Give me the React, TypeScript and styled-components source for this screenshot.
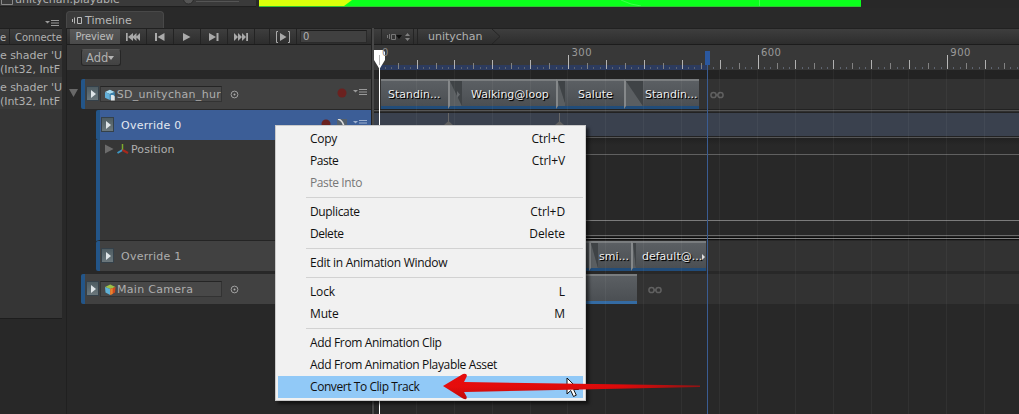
import React from "react";
import styled, { createGlobalStyle, css } from "styled-components";

const GlobalStyle = createGlobalStyle`
  * { box-sizing: border-box; }
  body { margin: 0; background: #282828; overflow: hidden; }
`;

const Editor = styled.div`
  position: relative;
  display: flex;
  flex-direction: column;
  width: 1019px;
  height: 414px;
  overflow: hidden;
  background: #282828;
  color: #b0b0b0;
  font: 11px/14px "DejaVu Sans", Verdana, sans-serif;
  white-space: nowrap;
  cursor: default;
`;

/* ---------- top strip ---------- */

const TopStrip = styled.div`
  display: flex;
  height: 8px;
  flex: none;
`;

const InspectorStrip = styled.div`
  display: flex;
  width: 256px;
  height: 7px;
  overflow: hidden;
  background: #3a3a3a;
  border-bottom: 1px solid #1f1f1f;
`;

const AssetName = styled.span`
  margin: -7px 0 0 1px;
  flex: 1;
`;

const GameView = styled.div`
  width: 602px;
  height: 7px;
  margin-left: 3px;
  background: #0aff1c;
  border-bottom: 1px solid #30c234;
  svg { display: block; }
`;

/* ---------- layout ---------- */

const Body = styled.div`
  display: flex;
  flex: 1;
  min-height: 0;
`;

const Console = styled.div`
  display: flex;
  flex-direction: column;
  width: 62px;
  height: 311px;
  flex: none;
  overflow: hidden;
  background: #353535;
  border-bottom: 1px solid #1d1d1d;
`;

const ConsoleTabs = styled.div`
  display: flex;
  justify-content: flex-end;
  height: 20px;
  padding: 12px 3px 0 0;
  background: #292929;
  flex: none;
`;

const ConsoleToolbar = styled.div`
  display: flex;
  height: 17px;
  flex: none;
  font-size: 10px;
  line-height: 17px;
  letter-spacing: -0.1px;
  background: linear-gradient(#3d3d3d, #2d2d2d);
  border-top: 1px solid #1f1f1f;
  border-bottom: 1px solid #1f1f1f;
`;

const ConsoleTool = styled.span<{ $w: number; $pad?: number }>`
  width: ${(p) => p.$w}px;
  padding-left: ${(p) => p.$pad ?? 0}px;
  border-right: 1px solid #222;
  flex: none;
`;

const LogEntry = styled.div<{ $alt?: boolean }>`
  height: 32px;
  padding-top: 4px;
  line-height: 13.5px;
  background: ${(p) => (p.$alt ? "#3b3b3b" : "#353535")};
  letter-spacing: -0.05px;
  white-space: pre;
  flex: none;
`;

const Timeline = styled.div`
  display: flex;
  flex-direction: column;
  width: 953px;
  margin-left: 4px;
  flex: none;
`;

const TabBar = styled.div`
  height: 20px;
  padding-top: 3px;
  background: #292929;
  flex: none;
`;

const Tab = styled.div`
  display: flex;
  align-items: center;
  width: 98px;
  height: 17px;
  padding: 1px 0 0 5px;
  gap: 3px;
  color: #b8b8b8;
  background: #3b3b3b;
  border: 1px solid #484848;
  border-bottom: 0;
  border-radius: 4px 4px 0 0;
`;

const Panes = styled.div`
  display: flex;
  flex: 1;
  min-height: 0;
`;

const Outline = styled.div`
  display: flex;
  flex-direction: column;
  width: 305px;
  border-left: 1px solid #202020;
`;

const Splitter = styled.div`
  width: 3px;
  background: #484848;
  border-left: 1px solid #222;
`;

const CanvasPane = styled.div`
  position: relative;
  display: flex;
  flex-direction: column;
  width: 645px;
`;

const toolbar = css`
  display: flex;
  height: 17px;
  flex: none;
  background: linear-gradient(#3e3e3e, #2d2d2d);
  border-top: 1px solid #212121;
  border-bottom: 1px solid #1c1c1c;
`;

const Toolbar = styled.div`
  ${toolbar}
  padding-left: 3px;
`;

const PreviewButton = styled.div`
  width: 50px;
  padding-right: 1px;
  font-size: 10px;
  line-height: 16px;
  text-align: center;
  letter-spacing: -0.1px;
  background: linear-gradient(#585858, #4a4a4a);
  color: #bcbcbc;
`;

const ToolButton = styled.div<{ $w: number }>`
  display: flex;
  align-items: center;
  justify-content: center;
  width: ${(p) => p.$w}px;
  border-right: 1px solid #232323;
  svg { display: block; }
`;

const FrameField = styled.div`
  width: 67px;
  height: 13px;
  margin: 1px 0 0 3px;
  padding-left: 2px;
  font-size: 10px;
  line-height: 12px;
  background: #404040;
  border: 1px solid #2a2a2a;
  border-top-color: #1c1c1c;
`;

const AddRow = styled.div`
  height: 25px;
  padding: 4px 0 0 14px;
  background: #383838;
  flex: none;
`;

const AddButton = styled.div`
  display: flex;
  align-items: center;
  width: 40px;
  height: 17px;
  padding-left: 4px;
  font-size: 11.5px;
  background: linear-gradient(#4f4f4f, #424242);
  border: 1px solid #262626;
  border-top-color: #565656;
  border-radius: 3px;
`;

/* ---------- track outline ---------- */

const Tree = styled.div`
  display: flex;
  flex-direction: column;
  flex: 1;
  padding-top: 9px;
  background: #282828;
`;

const TrackRow = styled.div<{ $indent: number; $tone?: "plain" | "selected"; $gap?: number }>`
  display: flex;
  align-items: center;
  height: 30px;
  margin: ${(p) => p.$gap ?? 0}px 0 0 ${(p) => p.$indent}px;
  flex: none;
  color: ${(p) => (p.$tone === "selected" ? "#e3e8f0" : "#aeaeae")};
  background: ${(p) => (p.$tone === "selected" ? "#3c5e97" : "#414141")};
  border-left: 4px solid #235588;
  border-radius: 2px 0 0 2px;
`;

const FoldRow = styled.div`
  display: flex;
  flex: none;
`;

const FoldGutter = styled.div`
  display: flex;
  align-items: center;
  width: 14px;
  padding: 0 0 2px 2px;
`;

const ExpandButton = styled.div`
  display: flex;
  align-items: center;
  justify-content: center;
  width: 13px;
  height: 15px;
  margin: 0 0 1px 1px;
  background: linear-gradient(#4e5c62, #6b777c);
  border: 1px solid #35414a;
  flex: none;
`;

const ObjectField = styled.div`
  display: flex;
  align-items: center;
  width: 122px;
  height: 16px;
  margin-left: 1px;
  padding: 1px 0 0 3px;
  overflow: hidden;
  background: #484848;
  border: 1px solid #333;
  border-top-color: #252525;
  flex: none;
`;

const ObjectName = styled.span`
  letter-spacing: 0.3px;
`;

const TrackName = styled.span`
  margin: 2px 0 0 7px;
  letter-spacing: 0.25px;
`;

const Picker = styled.span`
  display: flex;
  margin-left: 8px;
`;

const TrackTools = styled.span`
  display: flex;
  align-items: center;
  gap: 6px;
  margin: -3px 4px 0 auto;
`;

const CurvePanel = styled.div`
  display: flex;
  align-items: flex-start;
  height: 101px;
  margin-left: 29px;
  padding: 3px 0 0 5px;
  gap: 3px;
  background: #363636;
  border-left: 4px solid #235588;
  border-bottom: 1px solid #242424;
  flex: none;
`;

const PropertyName = styled.span`
  margin-left: -1px;
  letter-spacing: 0.1px;
`;

/* ---------- canvas ---------- */

const Breadcrumbs = styled.div`
  ${toolbar}
  align-items: center;
  svg { display: block; flex: none; }
`;

const CrumbName = styled.span`
  margin: 0 8px 0 10px;
`;

const Ruler = styled.div`
  height: 25px;
  background: #383838;
  flex: none;
  svg { display: block; }
`;

const RulerGap = styled.div`
  height: 9px;
  background: #232323;
  flex: none;
`;

const Lane = styled.div<{ $pad: number; $gap?: number }>`
  display: flex;
  height: 30px;
  margin-bottom: ${(p) => p.$gap ?? 0}px;
  padding-left: ${(p) => p.$pad}px;
  background: #323232;
  flex: none;
`;

const LaneDivider = styled.div<{ $h: number }>`
  height: ${(p) => p.$h}px;
  background: #303030;
  border-top: 1px solid #222;
  border-bottom: 1px solid #222;
  flex: none;
  &::before {
    content: "";
    display: block;
    height: 1px;
    background: #555;
  }
`;

const OverrideLane = styled.div`
  height: 23px;
  padding-left: 70px;
  background: #3a414e;
  flex: none;
  svg { display: block; }
`;

const CurveArea = styled.div`
  display: flex;
  flex-direction: column;
  height: 102px;
  padding-top: 15px;
  background: linear-gradient(#222 0, #282828 6px);
  flex: none;
`;

const CurveLine = styled.div<{ $tone: string; $after: number }>`
  height: 1px;
  margin-bottom: ${(p) => p.$after}px;
  background: ${(p) => p.$tone};
  flex: none;
`;

const Clip = styled.div<{ $w: number; $bright?: boolean; $pad?: number }>`
  display: flex;
  align-items: center;
  width: ${(p) => p.$w}px;
  height: 30px;
  padding: 2px 0 0 ${(p) => p.$pad ?? 0}px;
  overflow: hidden;
  color: #eee;
  text-shadow: 1px 1px 1px #000, 1px 1px 0 #111;
  background: linear-gradient(#5b5f63, #4b4f53);
  border-top: 2px solid #7a7d7f;
  border-bottom: 3px solid ${(p) => (p.$bright ? "#346ba3" : "#214c79")};
  flex: none;
`;

const ClipName = styled.span<{ $spacing?: number }>`
  letter-spacing: ${(p) => p.$spacing ?? 0}px;
`;

const Blend = styled.div<{ $w: number }>`
  width: ${(p) => p.$w}px;
  height: 30px;
  border-left: 2px solid #85888a;
  border-top: 2px solid #7a7d7f;
  border-bottom: 3px solid #214c79;
  background: linear-gradient(#505458, #45484b);
  flex: none;
  svg { display: block; }
`;

const HoldMark = styled.div`
  display: flex;
  align-items: center;
  margin-left: 11px;
  padding-top: 1px;
`;

const CanvasOverlay = styled.svg`
  position: absolute;
  left: 0;
  top: 17px;
  pointer-events: none;
`;

/* ---------- context menu ---------- */

const Menu = styled.div`
  position: absolute;
  left: 275px;
  top: 125px;
  width: 311px;
  height: 276px;
  padding: 2px;
  color: #101010;
  background: #f1f1f1;
  border: 1px solid #cacaca;
  box-shadow: 3px 3px 3px rgba(0, 0, 0, 0.55);
  font: 12px/22px "Open Sans", "Noto Sans", sans-serif;
`;

const MenuItem = styled.div<{ $state?: "disabled" | "active" }>`
  display: flex;
  justify-content: space-between;
  height: 22px;
  padding: 0 18px 0 32px;
  color: ${(p) => (p.$state === "disabled" ? "#777" : "inherit")};
  background: ${(p) => (p.$state === "active" ? "#91c9f7" : "transparent")};
`;

const MenuText = styled.span<{ $spacing: number }>`
  letter-spacing: ${(p) => p.$spacing}px;
`;

const MenuSeparator = styled.div`
  height: 1px;
  margin: 3px 0 3px 28px;
  background: #d2d2d2;
`;

const Annotation = styled.svg`
  position: absolute;
  left: 436px;
  top: 368px;
`;

/* ---------- glyphs ---------- */

const MenuGlyph = ({ color = "#9a9a9a" }: { color?: string }) => (
  <svg width="14" height="7" viewBox="0 0 14 7">
    <path d="M0 1h5L2.500 3.600z" fill={color} />
    <path d="M6 .5h8M6 3h8M6 5.500h8" stroke={color} strokeWidth="1" />
  </svg>
);

const RightArrow = () => (
  <svg width="8" height="8" viewBox="0 0 8 8">
    <path d="M2 0l5 4-5 4z" fill="#dfe5e8" />
  </svg>
);

const PrefabCube = () => (
  <svg width="13" height="12" viewBox="0 0 13 12">
    <path d="M1 3l5-2.400L11 3 6 5z" fill="#a7dcf2" />
    <path d="M1 3l5 2v6L1 8.800z" fill="#62b0da" />
    <path d="M6 5l5-2v5.500L6 11z" fill="#3a83b0" />
    <path d="M7 6h2.500L11 7.500V11.500H7z" fill="#dfe6e8" />
  </svg>
);

const CameraCube = () => (
  <svg width="13" height="12" viewBox="0 0 13 12">
    <path d="M1 3l5.200-2.400L11.500 3 6.200 5z" fill="#9cc047" />
    <path d="M1 3l5.200 2v6L1.500 8.500z" fill="#5fb1d6" />
    <path d="M6.200 5l5.300-2-.5 5.500L6.200 11z" fill="#cf4a1e" />
    <path d="M6.200 5l2.500-1v6L6.200 11z" fill="#e8832f" />
  </svg>
);

const PickerGlyph = () => (
  <svg width="9" height="9" viewBox="0 0 9 9">
    <circle cx="4.500" cy="4.500" r="3.400" fill="none" stroke="#a0a0a0" />
    <circle cx="4.500" cy="4.500" r="1" fill="#b0b0b0" />
  </svg>
);

const RecordGlyph = () => (
  <svg width="10" height="10" viewBox="0 0 10 10">
    <circle cx="5" cy="5" r="4.500" fill="#6b211f" />
  </svg>
);

const InfinityGlyph = () => (
  <svg width="14" height="8" viewBox="0 0 14 8">
    <circle cx="3.500" cy="4" r="2.600" fill="none" stroke="#606060" strokeWidth="1.500" />
    <circle cx="10.500" cy="4" r="2.600" fill="none" stroke="#606060" strokeWidth="1.500" />
    <path d="M6 4h2" stroke="#606060" strokeWidth="1.500" />
  </svg>
);

const BlendRamp = ({ w, arrow }: { w: number; arrow?: boolean }) => (
  <svg width={w} height="25" viewBox={`0 0 ${w} 25`}>
    <path d={`M0 0L${w} 25H0z`} fill="#5a5e61" />
    <path d={`M0 0L${w} 25V0z`} fill="#3f4346" />
    {arrow && <path d={`M${w - 5} 10l3 3.500-3 3.500z`} fill="#65696c" />}
  </svg>
);

const icon = "#aaa";
const TransportIcon = ({ w, d }: { w: number; d: string }) => (
  <svg width={w} height="12" viewBox={`0 0 ${w} 12`}>
    <path d={d} fill={icon} />
  </svg>
);

/* ---------- ruler ---------- */

const PX_PER_TEN_FRAMES = 6.315;
const ORIGIN = 5;
const tens = Array.from({ length: 102 }, (_, i) => i);

function tickStyle(i: number): { top: number; fill: string } {
  if (i % 30 === 0) return { top: 10, fill: "#b8b8b8" };
  if (i % 6 === 0) return { top: 15, fill: "#b0b0b0" };
  if (i % 3 === 0) return { top: 18, fill: "#828282" };
  return { top: 22, fill: "#5e6470" };
}

const RulerScale = () => (
  <svg width="645" height="25">
    <rect x="5" y="20" width="328" height="5" fill="#2c3b5f" />
    {tens.map((i) => {
      const { top, fill } = tickStyle(i);
      return <rect key={i} x={Math.round(ORIGIN - 0.3 + i * PX_PER_TEN_FRAMES)} y={top} width="1" height={24 - top} fill={fill} />;
    })}
    {[300, 600, 900].map((f) => (
      <text key={f} x={ORIGIN + (f / 10) * PX_PER_TEN_FRAMES + 3} y="11" fill="#9a9a9a" fontSize="10" letterSpacing="0.500">
        {f}
      </text>
    ))}
  </svg>
);

type Entry = { label: string; keys?: string; state?: "disabled" | "active"; spacing: number };

const menu: Array<null | Entry> = [
  { label: "Copy", keys: "Ctrl+C", spacing: -0.3 },
  { label: "Paste", keys: "Ctrl+V", spacing: -0.45 },
  { label: "Paste Into", state: "disabled", spacing: -0.4 },
  null,
  { label: "Duplicate", keys: "Ctrl+D", spacing: -0.35 },
  { label: "Delete", keys: "Delete", spacing: -0.45 },
  null,
  { label: "Edit in Animation Window", spacing: -0.28 },
  null,
  { label: "Lock", keys: "L", spacing: -0.15 },
  { label: "Mute", keys: "M", spacing: -0.15 },
  null,
  { label: "Add From Animation Clip", spacing: -0.35 },
  { label: "Add From Animation Playable Asset", spacing: -0.35 },
  { label: "Convert To Clip Track", state: "active", spacing: -0.43 },
];

const AnimationRow = styled(TrackRow)`
  width: 290px;
`;

const arrowShape = "M7 18L27 6q5-1 3.500 3l-2.500 5L264 17.500v1.500L28 24l2.500 4.500q1 4-3.500 2z";

export default function App() {
  return (
    <Editor>
      <GlobalStyle />
      <TopStrip>
        <InspectorStrip>
          <svg width="14" height="7"><path d="M1.500 0v4.500h11V0" fill="none" stroke="#8a8a8a" /></svg>
          <AssetName>unitychan.playable</AssetName>
          <svg width="74" height="7">
            <path d="M14 1.500h43" stroke="#555" />
            <circle cx="6.500" cy="-1" r="5" fill="#555" stroke="#2c2c2c" />
          </svg>
        </InspectorStrip>
        <GameView>
          <svg width="602" height="6">
            <path d="M0 0h93l-8 6H0z" fill="#d9ff0a" />
            <path d="M362 0q10 5 20 6M500.500 0v6" stroke="#3cff4b" fill="none" />
          </svg>
        </GameView>
      </TopStrip>

      <Body>
        <Console>
          <ConsoleTabs><MenuGlyph /></ConsoleTabs>
          <ConsoleToolbar>
            <ConsoleTool $w={10}>e</ConsoleTool>
            <ConsoleTool $w={60} $pad={5}>Connected</ConsoleTool>
          </ConsoleToolbar>
          <LogEntry>{"e shader 'U\n(Int32, IntF"}</LogEntry>
          <LogEntry $alt>{"e shader 'U\n(Int32, IntF"}</LogEntry>
        </Console>

        <Timeline>
          <TabBar>
            <Tab>
              <svg width="10" height="9" viewBox="0 0 10 9">
                <path d="M.5 3v3M2.500 1.500v6M5.500 1.500h4v6h-4z" fill="none" stroke="#b8b8b8" />
              </svg>
              Timeline
            </Tab>
          </TabBar>
          <Panes>
            <Outline>
              <Toolbar>
                <PreviewButton>Preview</PreviewButton>
                <ToolButton $w={27}><TransportIcon w={14} d="M0 2h1.700v8H0zM7 2v8L2 6zM10.500 2v8L6 6zM14 2v8l-4-4z" /></ToolButton>
                <ToolButton $w={27}><TransportIcon w={10} d="M0 2h2v8H0zM9.500 2v8L2.500 6z" /></ToolButton>
                <ToolButton $w={27}><TransportIcon w={8} d="M0 2v8l7.500-4z" /></ToolButton>
                <ToolButton $w={27}><TransportIcon w={10} d="M0 2v8l7-4zM7.500 2h2v8h-2z" /></ToolButton>
                <ToolButton $w={27}><TransportIcon w={14} d="M0 2v8l4-4zM4 2v8l4-4zM8 2v8l4-4zM12.200 2H14v8h-1.800z" /></ToolButton>
                <ToolButton $w={15} />
                <ToolButton $w={27}>
                  <svg width="16" height="12" viewBox="0 0 16 12">
                    <path d="M3 .5H1.500v11H3M13 .5h1.500v11H13" fill="none" stroke={icon} />
                    <path d="M5 2v8l6.500-4z" fill={icon} />
                  </svg>
                </ToolButton>
                <FrameField>0</FrameField>
              </Toolbar>
              <AddRow>
                <AddButton>
                  Add
                  <svg width="6" height="4"><path d="M0 0h6L3 4z" fill="#b4b4b4" /></svg>
                </AddButton>
              </AddRow>
              <Tree>
                <FoldRow>
                  <FoldGutter>
                    <svg width="9" height="8"><path d="M0 0h9L4.500 8z" fill="#686868" /></svg>
                  </FoldGutter>
                  <AnimationRow $indent={0}>
                    <ExpandButton><RightArrow /></ExpandButton>
                    <ObjectField><PrefabCube /><ObjectName>SD_unitychan_hur</ObjectName></ObjectField>
                    <Picker><PickerGlyph /></Picker>
                    <TrackTools><RecordGlyph /><MenuGlyph /></TrackTools>
                  </AnimationRow>
                </FoldRow>
                <TrackRow $indent={29} $tone="selected" $gap={1}>
                  <ExpandButton><RightArrow /></ExpandButton>
                  <TrackName>Override 0</TrackName>
                  <TrackTools>
                    <RecordGlyph />
                    <svg width="10" height="10"><path d="M0 0h10v10H0z" fill="#55606b" /><path d="M1 0c4 1 5 4 7 10" stroke="#dedede" strokeWidth="1.500" fill="none" /></svg>
                    <MenuGlyph color="#9db0cf" />
                  </TrackTools>
                </TrackRow>
                <CurvePanel>
                  <svg width="9" height="12" viewBox="0 0 9 12"><path d="M0 1.500v9L8.500 6z" fill="#6c6c6c" /></svg>
                  <svg width="12" height="12" viewBox="0 0 12 12">
                    <path d="M5.500 7V1" stroke="#7cab2d" strokeWidth="1.500" />
                    <path d="M5.500 7L.5 10" stroke="#3d97c4" strokeWidth="2" />
                    <path d="M5.500 7l5.500 3" stroke="#a8281c" strokeWidth="2" />
                  </svg>
                  <PropertyName>Position</PropertyName>
                </CurvePanel>
                <TrackRow $indent={29}>
                  <ExpandButton><RightArrow /></ExpandButton>
                  <TrackName>Override 1</TrackName>
                </TrackRow>
                <TrackRow $indent={14} $gap={3}>
                  <ExpandButton><RightArrow /></ExpandButton>
                  <ObjectField><CameraCube /><ObjectName>Main Camera</ObjectName></ObjectField>
                  <Picker><PickerGlyph /></Picker>
                </TrackRow>
              </Tree>
            </Outline>
            <Splitter />
            <CanvasPane>
              <Breadcrumbs>
                <svg width="44" height="15" viewBox="0 0 44 15">
                  <path d="M7.500 0v15M39.500 0v15M43.500 0v15" stroke="#242424" />
                  <path d="M13.500 6v3M15.500 5v5M17.500 5.500h4v5h-4z" stroke="#777" fill="none" />
                  <path d="M22 6h6l-3 4z" fill="#0d0d0d" />
                  <path d="M31 7h5l-2.500-3zM31 9h5l-2.500 3z" fill="#808080" />
                </svg>
                <CrumbName>unitychan</CrumbName>
                <svg width="12" height="15"><path d="M1 0l8 7.500L1 15" stroke="#262626" fill="none" /></svg>
              </Breadcrumbs>
              <Ruler><RulerScale /></Ruler>
              <RulerGap />
              <Lane $pad={7}>
                <Clip $w={67} $pad={7}><ClipName>Standin...</ClipName></Clip>
                <Blend $w={14}><BlendRamp w={12} arrow /></Blend>
                <Clip $w={94} $pad={9}><ClipName>Walking@loop</ClipName></Clip>
                <Blend $w={9}><BlendRamp w={8} /></Blend>
                <Clip $w={59} $pad={13}><ClipName>Salute</ClipName></Clip>
                <Blend $w={19}><BlendRamp w={17} /></Blend>
                <Clip $w={56} $pad={2}><ClipName>Standin...</ClipName></Clip>
                <HoldMark><InfinityGlyph /></HoldMark>
              </Lane>
              <LaneDivider $h={4} />
              <OverrideLane>
                <svg width="120" height="16">
                  <path d="M4.500 0v10M115.500 0v10" stroke="#666" />
                  <path d="M0 12l4.500-4 4.500 4zM111 12l4.500-4 4.500 4z" fill="#616161" />
                </svg>
              </OverrideLane>
              <LaneDivider $h={3} />
              <CurveArea>
                <CurveLine $tone="#606060" $after={65} />
                <CurveLine $tone="#7b7b7b" $after={14} />
                <CurveLine $tone="#6a6a6a" $after={0} />
                <CurveLine $tone="#202020" $after={0} />
                <CurveLine $tone="#0e0e0e" $after={0} />
                <CurveLine $tone="#838383" $after={0} />
                <CurveLine $tone="#0e0e0e" $after={0} />
              </CurveArea>
              <Lane $pad={6} $gap={3}>
                <Clip $w={209} />
                <Blend $w={9}><BlendRamp w={7} /></Blend>
                <Clip $w={33} $pad={1}><ClipName>smi...</ClipName></Clip>
                <Blend $w={5}><BlendRamp w={3} /></Blend>
                <Clip $w={70} $pad={6}>
                  <ClipName>default@...</ClipName>
                  <svg width="4" height="8"><path d="M0 1l3 3-3 3z" fill="#ddd" /></svg>
                </Clip>
              </Lane>
              <Lane $pad={6}>
                <Clip $w={257} $bright />
                <HoldMark><InfinityGlyph /></HoldMark>
              </Lane>
              <CanvasOverlay width="645" height="369">
                {Array.from({ length: 17 }, (_, i) => (
                  <rect key={i} x={Math.round(ORIGIN + (i + 1) * 6 * PX_PER_TEN_FRAMES) - 1} y="25" width="1" height="344" fill="#fff" opacity="0.045" />
                ))}
                <rect x="331" y="6" width="5" height="14" fill="#2b589f" />
                <rect x="333" y="20" width="1" height="349" fill="#3a5c92" />
                <path d="M0 5h9l2 2v8l-5.500 9L0 15z" fill="#fff" />
                <rect x="5" y="10" width="1" height="10" fill="#b5b5b5" />
                <rect x="5" y="20" width="1" height="349" fill="#fff" />
                <text x="8" y="11" fill="#8a8a8a" fontSize="10">0</text>
              </CanvasOverlay>
            </CanvasPane>
          </Panes>
        </Timeline>
      </Body>

      <Menu>
        {menu.map((entry, i) =>
          entry ? (
            <MenuItem key={i} $state={entry.state}>
              <MenuText $spacing={entry.spacing}>{entry.label}</MenuText>
              {entry.keys && <MenuText $spacing={-0.1}>{entry.keys}</MenuText>}
            </MenuItem>
          ) : (
            <MenuSeparator key={i} />
          )
        )}
      </Menu>

      <Annotation width="270" height="40" viewBox="0 0 270 40">
        <defs>
          <linearGradient id="shaft" x1="0" x2="1">
            <stop offset="0" stopColor="#e60d0d" />
            <stop offset="0.700" stopColor="#dd0a0a" />
            <stop offset="1" stopColor="#8e1414" />
          </linearGradient>
          <linearGradient id="shade" x1="0" x2="0" y1="0" y2="1">
            <stop offset="0.500" stopColor="#700" stopOpacity="0" />
            <stop offset="1" stopColor="#700" stopOpacity="0.350" />
          </linearGradient>
        </defs>
        <path d="M131 10v16l3.700-3.500 2.800 6 2.800-1.300-2.700-5.700h5z" fill="#fff" stroke="#111" />
        <path d={arrowShape} fill="url(#shaft)" />
        <path d={arrowShape} fill="url(#shade)" />
      </Annotation>
    </Editor>
  );
}
